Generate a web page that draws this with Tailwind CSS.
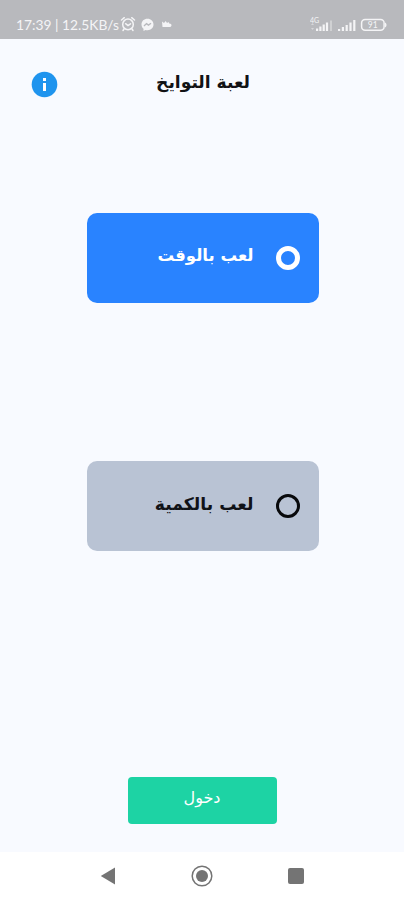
<!DOCTYPE html>
<html lang="ar">
<head>
<meta charset="utf-8">
<meta name="viewport" content="width=device-width, initial-scale=1">
<title>لعبة التوايخ</title>
<script src="https://cdn.jsdelivr.net/npm/@tailwindcss/browser@4"></script>
</head>
<body class="flex h-[900px] w-[404px] flex-col overflow-hidden bg-[#f8faff] font-['DejaVu_Sans',sans-serif]">
<div class="flex h-[39px] shrink-0 items-start bg-[#b8b9bd] pt-[15px] pr-[17px] pl-4 text-[#f4f4f6]">
  <span class="w-[104px] whitespace-nowrap font-['Lato','Open_Sans',sans-serif] text-[13.8px] leading-5">17:39 | 12.5KB/s</span>
  <svg class="mt-[1px] size-4" viewBox="0 0 16 16" fill="none" stroke="currentColor" stroke-width="1.5" stroke-linecap="round"><circle cx="8" cy="8.4" r="5.3"/><path d="M1.5 4 4.3 1.7M14.5 4 11.7 1.7M5.6 7.7 8 9.6l2.5-1.8M4 13l-1 1.500M12 13l1 1.500"/></svg>
  <svg class="mt-[3px] ml-[5px] h-[14px] w-[13px]" viewBox="0 0 13 14"><path fill="currentColor" d="M6.5.8C3 .8.5 3.200.5 6.500c0 1.700.8 3.300 2 4.300v2.300l2-1.100c.6.2 1.300.2 2 .2 3.500 0 6-2.500 6-5.700S10 .8 6.500.8z"/><path d="m3 8 2.500-2.400 2 1.500L10 5.300" fill="none" stroke="#b8b9bd" stroke-width="1.400"/></svg>
  <svg class="mt-[5px] ml-[7px] h-2 w-[11px]" viewBox="0 0 11 8" fill="currentColor"><path d="M1 1.500 3 3l1.700-2L6 3l1.500-1 .8 1.500c1.500.1 2.200.7 2.200 1.700S9.700 7 8.500 7H1.500z"/></svg>
  <div class="flex-1"></div>
  <svg class="mt-[1px] h-[17px] w-[77px]" viewBox="0 0 77 17" fill="currentColor">
    <text x="0" y="6.500" font-family="Lato, sans-serif" font-size="7">4G</text>
    <path d="M1 9h3l-1.500-2zM1 12h3l-1.500 2z" opacity=".5"/>
    <path d="M6 12.500h2.200V15H6zM9.300 10.500h2.200V15H9.300zM12.600 8.500h2.200V15h-2.200zM15.900 6.500h2.200V15h-2.200z"/>
    <path d="M20 4.500h2V15h-2z" opacity=".4"/>
    <path d="M28 13h2.200v2H28zM31.800 11H34v4h-2.200zM35.600 9h2.200v6h-2.200zM39.400 6.500h2.200V15h-2.200zM43.200 4h2.200v11h-2.200z"/>
    <rect x="51.600" y="3.600" width="22.500" height="10.700" rx="3.500" fill="none" stroke="currentColor" stroke-width="1.500"/>
    <path d="M75 6.500c2 .8 2 4 0 5z"/>
    <text x="62.800" y="12" text-anchor="middle" font-family="Lato, sans-serif" font-size="8.500">91</text>
  </svg>
</div>

<main class="flex flex-1 flex-col items-center">
  <header class="flex h-[86px] w-full items-start justify-between pt-8 pr-[154px] pl-[31px]">
    <svg class="size-[27px]" viewBox="0 0 27 27"><circle cx="13.500" cy="13.500" r="12.800" fill="#1f94ee"/><path fill="#fff" d="M12 7h3v3h-3zM12 12h3v8h-3z"/></svg>
    <h1 dir="rtl" class="w-[94px] whitespace-nowrap text-[17.1px] leading-[22px] font-bold text-[#111215]">لعبة التوايخ</h1>
  </header>
  <button dir="rtl" class="mt-[88px] ml-px flex h-[90px] w-[232px] items-center rounded-[10px] bg-[#2983ff] pr-[19px] text-white">
    <span class="size-[24px] rounded-full border-[5px] border-white"></span>
    <span class="mr-[22px] -mt-[5px] whitespace-nowrap text-[16.500px] leading-6 font-bold">لعب بالوقت</span>
  </button>
  <button dir="rtl" class="mt-[158px] ml-px flex h-[90px] w-[232px] items-center rounded-[10px] bg-[#b9c3d4] pr-[19px] text-[#101217]">
    <span class="size-[24px] rounded-full border-[3px] border-[#08090b]"></span>
    <span class="mr-[22px] -mt-[5px] whitespace-nowrap text-[17.200px] leading-6 font-bold">لعب بالكمية</span>
  </button>
  <button dir="rtl" class="mt-[226px] flex h-[47px] w-[149px] justify-center rounded-[4px] bg-[#1dd3a4] pt-[9px] text-[16px] leading-6 text-white">دخول</button>
</main>

<nav class="flex h-12 shrink-0 items-center justify-between bg-white pr-[100px] pl-[100px] text-[#747474]">
  <svg class="h-[18px] w-4" viewBox="0 0 16 18"><path d="M.8 9 15 .5v17z" fill="currentColor"/></svg>
  <svg class="size-[22px]" viewBox="0 0 22 22"><circle cx="11" cy="11" r="9.800" fill="none" stroke="currentColor" stroke-width="1.500"/><circle cx="11" cy="11" r="6" fill="currentColor"/></svg>
  <span class="size-4 rounded-[2px] bg-[#747474]"></span>
</nav>
</body>
</html>
